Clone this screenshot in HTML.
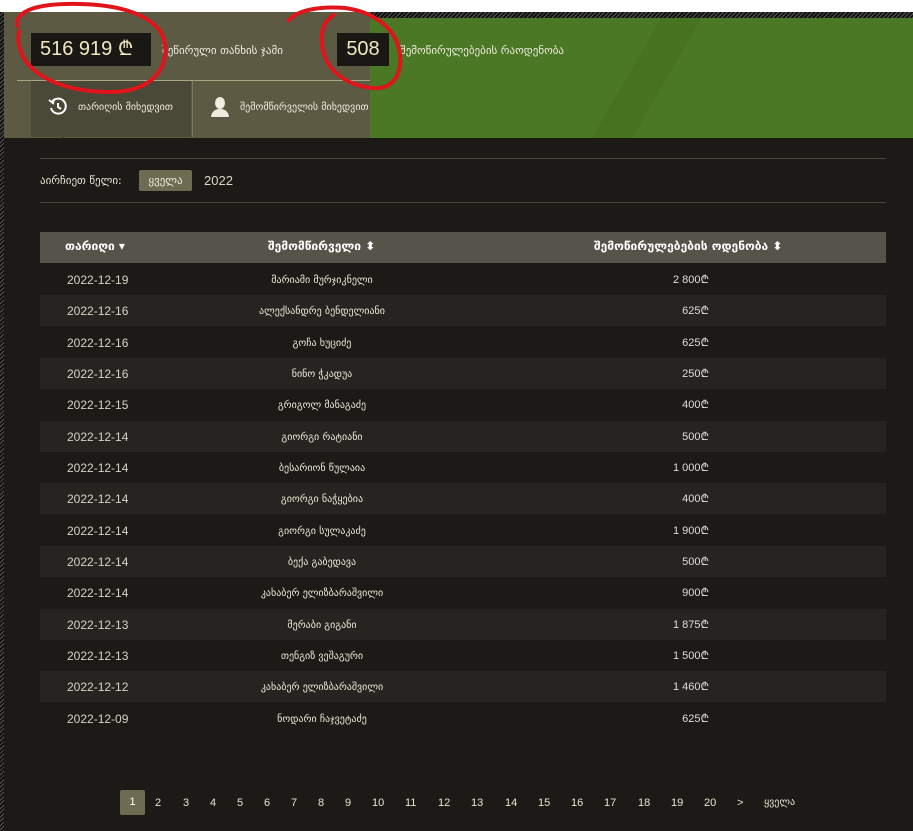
<!DOCTYPE html>
<html><head><meta charset="utf-8"><style>
*{margin:0;padding:0;box-sizing:border-box}
body{width:913px;height:831px;overflow:hidden;background:#1c1a17;position:relative;font-family:"Liberation Sans","DejaVu Sans",sans-serif;color:#ddd8c4}
.abs{position:absolute}
.geo{font-family:"DejaVu Sans",sans-serif}
.row{position:absolute;left:40px;width:846px;height:31px;font-size:12px}
.row .d{position:absolute;left:27px;top:9px;color:#d6d2c4}
.row .n{position:absolute;left:180px;width:204px;text-align:center;top:11px;font-size:10px;color:#ece8d8}
.row .a{position:absolute;right:177px;top:8px;font-size:11px;color:#ddd}
.pg{position:absolute;top:797px;font-size:11px;color:#e8e4d0}
</style></head><body>
<div class="abs" style="left:0;top:0;width:913px;height:12px;background:#fff"></div>
<div class="abs" style="left:232px;top:12px;width:681px;height:6px;background:repeating-linear-gradient(135deg,#111 0 2px,#555 2px 3px)"></div>
<div class="abs" style="left:0;top:12px;width:4px;height:819px;background:repeating-linear-gradient(135deg,#111 0 2px,#555 2px 3px)"></div>
<div class="abs" style="left:4px;top:12px;width:366px;height:126px;background:#5c5a43"></div>
<div class="abs" style="left:370px;top:18px;width:543px;height:120px;background:#4a7824"></div>
<div class="abs" style="left:540px;top:18px;width:200px;height:120px;background:linear-gradient(120deg,transparent 45%,#47731f 45%,#47731f 60%,transparent 60%)"></div>
<div class="abs" style="left:31px;top:33px;width:120px;height:33px;background:#1a1814;color:#f0e8c0;font-size:20px;line-height:33px;padding-left:9px">516 919 ₾</div>
<div class="abs geo" style="left:162px;top:44px;font-size:11px;color:#f0ece0">შეწირული თანხის ჯამი</div>
<div class="abs" style="left:337px;top:33px;width:52px;height:33px;background:#1a1814;color:#f0e8c0;font-size:20px;line-height:33px;text-align:center">508</div>
<div class="abs geo" style="left:400px;top:44px;font-size:11px;color:#f0ece0">შემოწირულებების რაოდენობა</div>
<div class="abs" style="left:17px;top:80px;width:353px;height:1px;background:#a9a684"></div>
<div class="abs" style="left:31px;top:81px;width:160px;height:56px;background:#4a4836"></div>
<div class="abs" style="left:192px;top:81px;width:1px;height:56px;background:#7c7a5e"></div>
<svg class="abs" style="left:48px;top:97px" width="20" height="20" viewBox="0 0 20 20"><path d="M4 5 A7.5 7.5 0 1 1 3 11" fill="none" stroke="#fff" stroke-width="2"/><path d="M1 3 L5 6 L6 2" fill="none" stroke="#fff" stroke-width="2"/><path d="M10 6 V10 L13 12" fill="none" stroke="#fff" stroke-width="2"/></svg>
<div class="abs geo" style="left:78px;top:102px;font-size:10px;color:#f0ece0">თარიღის მიხედვით</div>
<svg class="abs" style="left:210px;top:96px" width="20" height="22" viewBox="0 0 20 22"><ellipse cx="10" cy="7" rx="5" ry="6" fill="#f0ece0"/><path d="M1 21 Q2 13 10 13 Q18 13 19 21Z" fill="#f0ece0"/></svg>
<div class="abs geo" style="left:240px;top:102px;font-size:10px;color:#f0ece0">შემომწირველის მიხედვით</div>
<div class="abs" style="left:57px;top:131px;width:0;height:0;border:6px solid transparent;border-bottom-color:#1c1a17"></div>
<div class="abs" style="left:40px;top:158px;width:846px;height:1px;background:#4a4740"></div>
<div class="abs geo" style="left:40px;top:174px;font-size:11px;color:#e8e4d6">აირჩიეთ წელი:</div>
<div class="abs geo" style="left:139px;top:170px;width:53px;height:21px;background:#6d6b52;border-radius:2px;font-size:11px;line-height:21px;text-align:center;color:#f0ece0">ყველა</div>
<div class="abs" style="left:204px;top:173px;font-size:13px;color:#ddd8c4">2022</div>
<div class="abs" style="left:40px;top:202px;width:846px;height:1px;background:#4a4740"></div>
<div class="abs" style="left:40px;top:232px;width:846px;height:31px;background:#56534a"></div>
<div class="abs geo" style="left:65px;top:239px;font-size:12px;font-weight:bold;color:#fff">თარიღი ▾</div>
<div class="abs geo" style="left:268px;top:239px;font-size:12px;font-weight:bold;color:#fff">შემომწირველი ⬍</div>
<div class="abs geo" style="left:594px;top:239px;font-size:12px;font-weight:bold;color:#fff">შემოწირულებების ოდენობა ⬍</div>
<div class="row" style="top:264px"><span class="d">2022-12-19</span><span class="n geo">მარიამი მურჯიკნელი</span><span class="a">2 800₾</span></div>
<div class="row" style="top:295px;background:#262420"><span class="d">2022-12-16</span><span class="n geo">ალექსანდრე ბენდელიანი</span><span class="a">625₾</span></div>
<div class="row" style="top:327px"><span class="d">2022-12-16</span><span class="n geo">გოჩა ხუციძე</span><span class="a">625₾</span></div>
<div class="row" style="top:358px;background:#262420"><span class="d">2022-12-16</span><span class="n geo">ნინო ჭკადუა</span><span class="a">250₾</span></div>
<div class="row" style="top:389px"><span class="d">2022-12-15</span><span class="n geo">გრიგოლ მანაგაძე</span><span class="a">400₾</span></div>
<div class="row" style="top:421px;background:#262420"><span class="d">2022-12-14</span><span class="n geo">გიორგი რატიანი</span><span class="a">500₾</span></div>
<div class="row" style="top:452px"><span class="d">2022-12-14</span><span class="n geo">ბესარიონ წულაია</span><span class="a">1 000₾</span></div>
<div class="row" style="top:483px;background:#262420"><span class="d">2022-12-14</span><span class="n geo">გიორგი ნაჭყებია</span><span class="a">400₾</span></div>
<div class="row" style="top:515px"><span class="d">2022-12-14</span><span class="n geo">გიორგი სულაკაძე</span><span class="a">1 900₾</span></div>
<div class="row" style="top:546px;background:#262420"><span class="d">2022-12-14</span><span class="n geo">ბექა გაბედავა</span><span class="a">500₾</span></div>
<div class="row" style="top:577px"><span class="d">2022-12-14</span><span class="n geo">კახაბერ ელიზბარაშვილი</span><span class="a">900₾</span></div>
<div class="row" style="top:609px;background:#262420"><span class="d">2022-12-13</span><span class="n geo">მერაბი გიგანი</span><span class="a">1 875₾</span></div>
<div class="row" style="top:640px"><span class="d">2022-12-13</span><span class="n geo">თენგიზ ვეშაგური</span><span class="a">1 500₾</span></div>
<div class="row" style="top:671px;background:#262420"><span class="d">2022-12-12</span><span class="n geo">კახაბერ ელიზბარაშვილი</span><span class="a">1 460₾</span></div>
<div class="row" style="top:703px"><span class="d">2022-12-09</span><span class="n geo">ნოდარი ჩაჯვეტაძე</span><span class="a">625₾</span></div>
<div class="abs" style="left:120px;top:790px;width:25px;height:25px;background:#6d6b52;border-radius:2px;color:#fff;font-size:11px;line-height:25px;text-align:center">1</div>
<span class="pg" style="left:155px">2</span><span class="pg" style="left:183px">3</span><span class="pg" style="left:210px">4</span><span class="pg" style="left:237px">5</span><span class="pg" style="left:264px">6</span><span class="pg" style="left:291px">7</span><span class="pg" style="left:318px">8</span><span class="pg" style="left:345px">9</span><span class="pg" style="left:372px">10</span><span class="pg" style="left:405px">11</span><span class="pg" style="left:438px">12</span><span class="pg" style="left:471px">13</span><span class="pg" style="left:505px">14</span><span class="pg" style="left:538px">15</span><span class="pg" style="left:571px">16</span><span class="pg" style="left:604px">17</span><span class="pg" style="left:638px">18</span><span class="pg" style="left:671px">19</span><span class="pg" style="left:704px">20</span><span class="pg" style="left:737px">&gt;</span><span class="pg geo" style="left:764px;font-size:10px">ყველა</span>
<svg class="abs" style="left:0;top:0" width="913" height="140"><path d="M18 28 C12 10 40 3 80 4 C130 5 162 20 165 45 C168 70 150 92 110 92 C70 92 35 80 22 55 C18 45 17 36 20 30" fill="none" stroke="#e0141b" stroke-width="4"/><path d="M288 22 C295 10 320 6 345 8 C375 12 398 30 400 55 C402 78 390 90 372 88 C345 85 325 70 322 45 C320 30 325 20 335 14" fill="none" stroke="#e0141b" stroke-width="4"/></svg>
</body></html>
